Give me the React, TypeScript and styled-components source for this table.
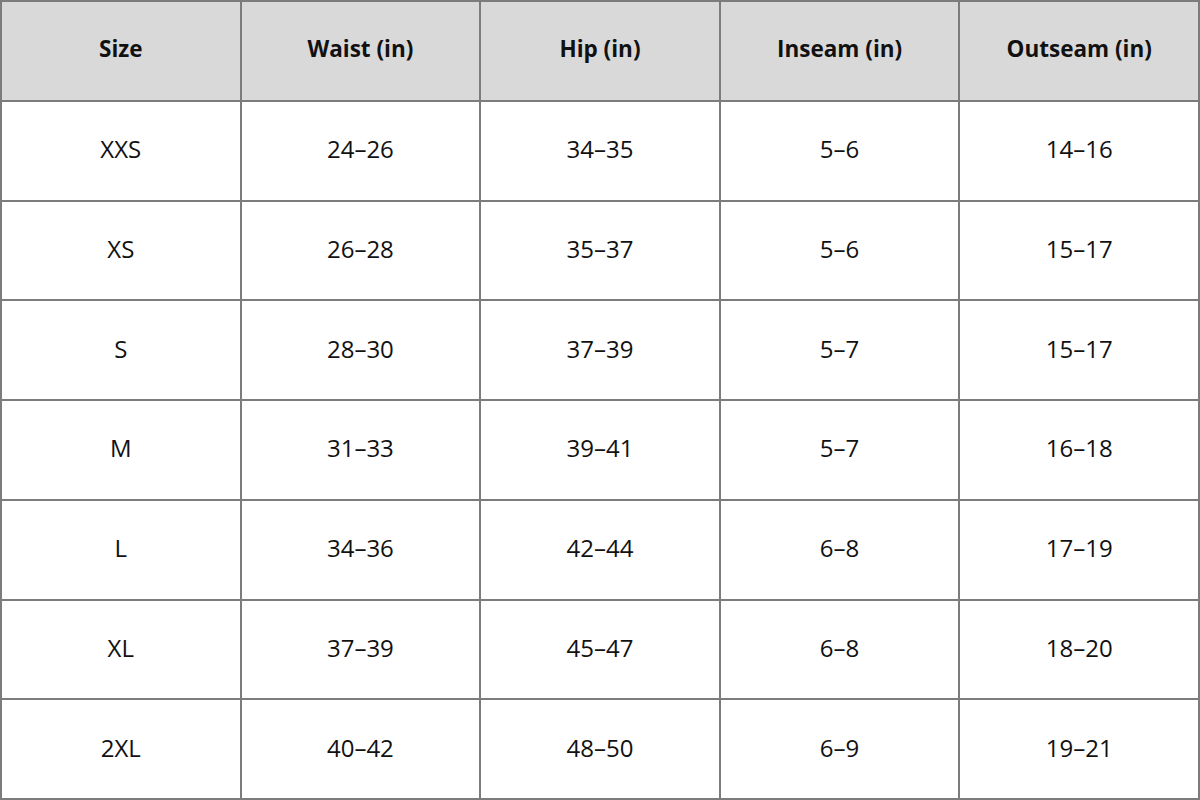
import React from 'react';
import styled, { createGlobalStyle } from 'styled-components';

const GlobalStyle = createGlobalStyle`
  html, body {
    margin: 0;
    padding: 0;
    background: #ffffff;
  }
`;

const Table = styled.div`
  width: 1200px;
  height: 800px;
  box-sizing: border-box;
  display: grid;
  grid-template-columns: repeat(5, 1fr);
  grid-template-rows: repeat(8, 1fr);
  border-top: 2px solid #7c7c7c;
  border-left: 2px solid #7c7c7c;
  font-family: 'Open Sans', 'Liberation Sans', sans-serif;
  color: #111111;
`;

const Cell = styled.div<{ head?: boolean }>`
  display: flex;
  align-items: center;
  justify-content: center;
  box-sizing: border-box;
  border-right: 2px solid #7c7c7c;
  border-bottom: 2px solid #7c7c7c;
  background: ${({ head }) => (head ? '#d9d9d9' : '#ffffff')};
  font-size: ${({ head }) => (head ? '22.5px' : '24px')};
  font-weight: ${({ head }) => (head ? 700 : 400)};
  padding-bottom: 4px;
`;

const headers = ['Size', 'Waist (in)', 'Hip (in)', 'Inseam (in)', 'Outseam (in)'];

const rows = [
  ['XXS', '24–26', '34–35', '5–6', '14–16'],
  ['XS', '26–28', '35–37', '5–6', '15–17'],
  ['S', '28–30', '37–39', '5–7', '15–17'],
  ['M', '31–33', '39–41', '5–7', '16–18'],
  ['L', '34–36', '42–44', '6–8', '17–19'],
  ['XL', '37–39', '45–47', '6–8', '18–20'],
  ['2XL', '40–42', '48–50', '6–9', '19–21'],
];

export default function App() {
  return (
    <>
      <GlobalStyle />
      <Table>
        {headers.map((h) => (
          <Cell key={h} head>
            {h}
          </Cell>
        ))}
        {rows.map((row, i) =>
          row.map((value, j) => <Cell key={`${i}-${j}`}>{value}</Cell>)
        )}
      </Table>
    </>
  );
}
